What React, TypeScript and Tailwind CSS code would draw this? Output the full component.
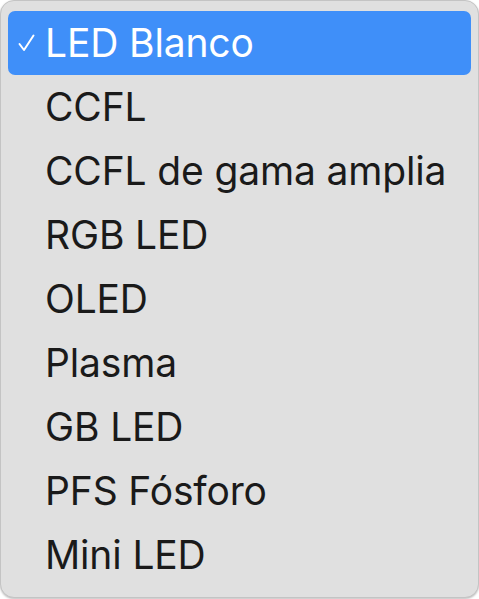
import React from "react";

const items = [
  "LED Blanco",
  "CCFL",
  "CCFL de gama amplia",
  "RGB LED",
  "OLED",
  "Plasma",
  "GB LED",
  "PFS Fósforo",
  "Mini LED",
];

const App = () => {
  const selected = 0;

  return (
    <div className="w-[479px] h-[599px] bg-white">
      <div
        className="w-[479px] h-[598px] rounded-[14px] border border-[#c4c4c4] bg-[#e0e0e0] px-[7px] pt-[10px] shadow-[0_1px_2px_rgba(0,0,0,0.25)]"
        style={{ fontFamily: "Inter, 'Liberation Sans', sans-serif" }}
      >
        <ul className="flex flex-col">
          {items.map((item, index) => (
            <li
              key={item}
              className={`flex h-[64px] items-center rounded-[7px] ${
                index === selected ? "bg-[#3f8ff9] text-white" : "text-[#1a1a1a]"
              }`}
            >
              <span className="flex w-[37px] pl-[10px]">
                {index === selected && (
                  <svg width="17" height="18" viewBox="0 0 17 18" fill="none">
                    <path
                      d="M1.5 10 L6 16 L15.5 1.5"
                      stroke="white"
                      strokeWidth="2"
                      strokeLinecap="round"
                      strokeLinejoin="round"
                    />
                  </svg>
                )}
              </span>
              <span className="pb-[2px] text-[39px] leading-none tracking-[-0.15px]">{item}</span>
            </li>
          ))}
        </ul>
      </div>
    </div>
  );
};

export default App;
